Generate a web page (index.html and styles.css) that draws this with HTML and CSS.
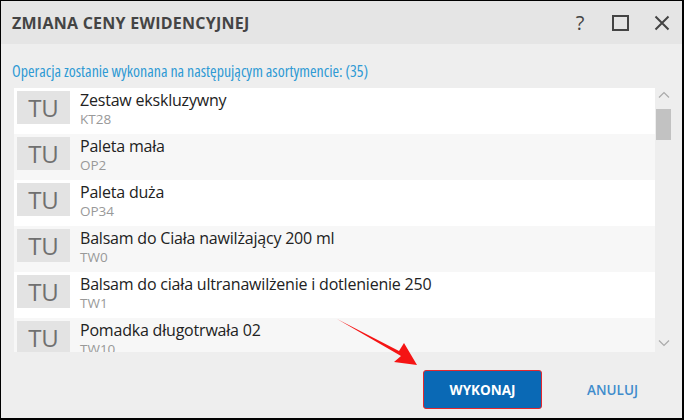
FILE: index.html
```html
<!DOCTYPE html>
<html>
<head>
<meta charset="utf-8">
<link rel="stylesheet" href="styles.css">
</head>
<body>
<div class="window">
  <div class="titlebar">
    <div class="title">ZMIANA CENY EWIDENCYJNEJ</div>
    <div class="controls">
      <span class="help">?</span>
      <svg class="ctl" width="17" height="16" viewBox="0 0 17 16"><rect x="1" y="1" width="15" height="14" fill="none" stroke="#444" stroke-width="2"/></svg>
      <svg class="ctl" width="16" height="16" viewBox="0 0 16 16"><path d="M1.5 1.5 L14.5 14.5 M14.5 1.5 L1.5 14.5" stroke="#444" stroke-width="2"/></svg>
    </div>
  </div>
  <div class="body">
    <div class="subtitle">Operacja zostanie wykonana na następującym asortymencie: (35)</div>
    <div class="listwrap">
      <div class="list">
        <div class="row"><div class="badge">TU</div><div class="info"><div class="name">Zestaw ekskluzywny</div><div class="code">KT28</div></div></div>
        <div class="row alt"><div class="badge">TU</div><div class="info"><div class="name">Paleta mała</div><div class="code">OP2</div></div></div>
        <div class="row"><div class="badge">TU</div><div class="info"><div class="name">Paleta duża</div><div class="code">OP34</div></div></div>
        <div class="row alt"><div class="badge">TU</div><div class="info"><div class="name">Balsam do Ciała nawilżający 200 ml</div><div class="code">TW0</div></div></div>
        <div class="row"><div class="badge">TU</div><div class="info"><div class="name">Balsam do ciała ultranawilżenie i dotlenienie 250</div><div class="code">TW1</div></div></div>
        <div class="row alt"><div class="badge">TU</div><div class="info"><div class="name">Pomadka długotrwała 02</div><div class="code">TW10</div></div></div>
      </div>
      <div class="scrollbar">
        <svg class="arrow-up" width="12" height="8" viewBox="0 0 12 8"><path d="M1 6.5 L6 1.5 L11 6.5" fill="none" stroke="#aaa" stroke-width="1.2"/></svg>
        <div class="thumb"></div>
        <div class="track"></div>
        <svg class="arrow-down" width="12" height="8" viewBox="0 0 12 8"><path d="M1 1.5 L6 6.5 L11 1.5" fill="none" stroke="#aaa" stroke-width="1.2"/></svg>
      </div>
    </div>
    <div class="footer">
      <button class="btn primary">WYKONAJ</button>
      <button class="btn link">ANULUJ</button>
    </div>
  </div>
  <svg class="pointer" width="100" height="60" viewBox="0 0 100 60">
    <polygon points="1,1 65,38 58,44 81,47 68,25 63,33" fill="#f51414"/>
  </svg>
</div>
</body>
</html>
```
FILE: styles.css
```css
* { box-sizing: border-box; }
html, body { margin: 0; padding: 0; }
body { width: 684px; height: 420px; overflow: hidden; font-family: "Open Sans", "Noto Sans", sans-serif; }
.window {
  position: relative;
  width: 684px; height: 420px;
  border-top: 1px solid #000; border-left: 1px solid #000;
  border-right: 2px solid #000; border-bottom: 2px solid #000;
  background: #eeeeee;
  display: flex; flex-direction: column;
}
.titlebar {
  height: 43px; background: #e5e5e5;
  display: flex; align-items: center; justify-content: space-between;
  padding: 0 12px 0 11px;
}
.title { font-weight: 700; font-size: 16px; color: #444; letter-spacing: 0.25px; }
.controls { display: flex; align-items: center; gap: 0; }
.help { font-size: 20px; color: #444; width: 12px; text-align: center; margin-right: 26px; line-height: 1; }
.ctl { display: block; }
.ctl + .ctl { margin-left: 25px; }
.body { flex: 1; display: flex; flex-direction: column; padding: 0 0 0 11px; }
.subtitle { color: #2f9ad4; font-size: 15.9px; font-stretch: 87.5%; height: 44px; display: flex; align-items: center; padding-top: 9px; }
.listwrap { display: flex; margin-left: 2px; height: 264px; }
.list { width: 641px; overflow: hidden; }
.row { height: 46px; background: #fff; display: flex; padding: 3px 0 0 3px; }
.row.alt { background: #f7f7f7; }
.badge {
  width: 53px; height: 33px; background: #e3e3e3; color: #707070;
  font-size: 24px; display: flex; align-items: center; justify-content: center; line-height: 1;
}
.info { padding-left: 10px; }
.name { font-size: 16px; color: #222; line-height: 19px; letter-spacing: -0.2px; }
.code { font-size: 13.5px; color: #999; line-height: 18px; }
.scrollbar { width: 17px; position: relative; display: flex; flex-direction: column; align-items: center; }
.arrow-up { margin-top: 3px; }
.thumb { width: 15px; height: 31px; background: #c2c2c2; margin-top: 10px; }
.track { flex: 1; }
.arrow-down { margin-bottom: 5px; }
.footer { display: flex; justify-content: flex-end; align-items: center; padding-top: 18px; padding-right: 44px; }
.btn { font-family: inherit; font-weight: 700; font-size: 13.5px; border: none; cursor: pointer; }
.btn.primary {
  width: 119px; height: 39px; background: #0a69b5; color: #fff;
  border: 1.5px solid #e3282e; border-radius: 3px;
}
.btn.link { background: none; color: #3f8ccc; font-weight: 600; margin-left: 45px; padding: 0; }
.pointer { position: absolute; left: 335px; top: 317px; }
```
